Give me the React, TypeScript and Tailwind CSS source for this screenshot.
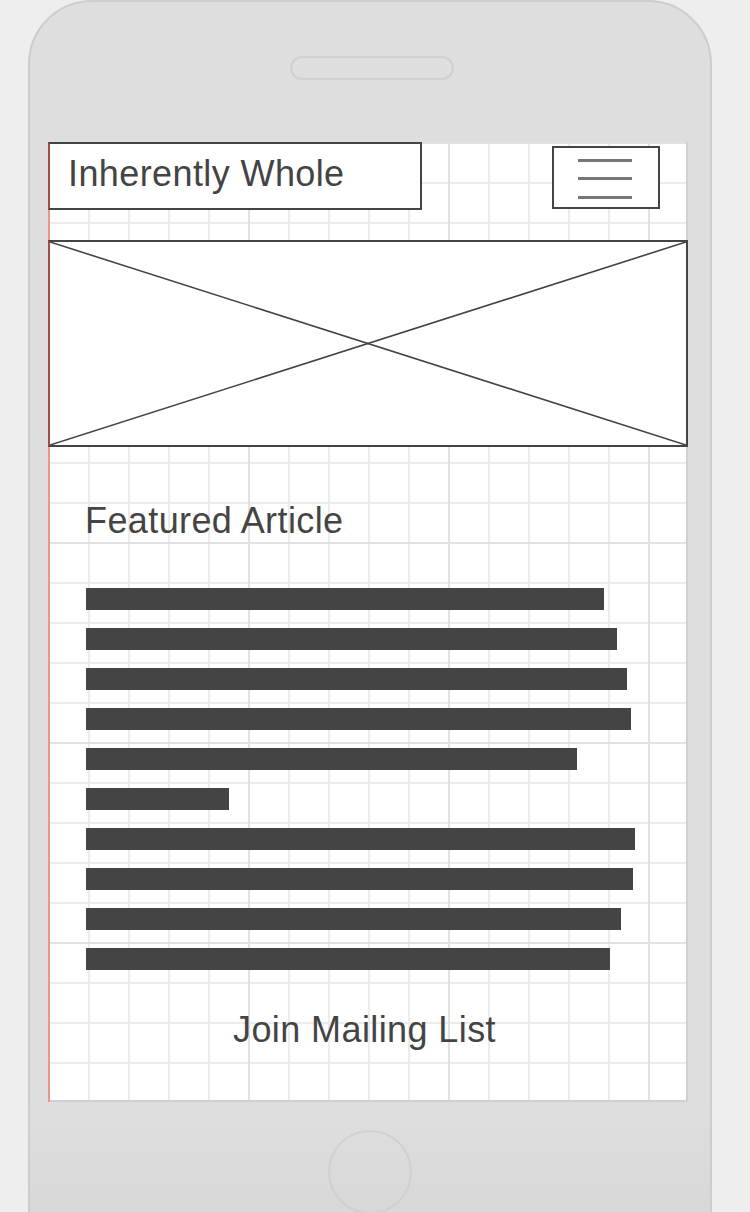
import React from "react";

const bars = [604, 617, 627, 631, 577, 229, 635, 633, 621, 610];

export default function App() {
  return (
    <div
      className="w-[750px] h-[1212px] overflow-hidden bg-[#eeeeee]"
      style={{ fontFamily: '"Liberation Sans", Arial, sans-serif' }}
    >
      <div className="ml-[28px] w-[684px] h-[1260px] border-2 border-[#cdcdcd] rounded-t-[64px] [background-image:linear-gradient(to_bottom,#dedede_88%,#d6d6d6_100%)]">
        {/* speaker */}
        <div className="mt-[54px] ml-[260px] w-[164px] h-[24px] rounded-full border-2 border-[#d0d0d0]" />
        {/* screen */}
        <div className="mt-[62px] ml-[18px] w-[640px] h-[960px] bg-white shadow-[inset_2px_0_0_#e8968c,inset_-2px_-2px_0_#d0d0d0] [background-image:linear-gradient(to_right,#e2e2e2_2px,transparent_2px),linear-gradient(to_bottom,#e2e2e2_2px,transparent_2px),linear-gradient(to_right,#ececec_2px,transparent_2px),linear-gradient(to_bottom,#ececec_2px,transparent_2px)] [background-size:200px_200px,200px_200px,40px_40px,40px_40px]">
          {/* header */}
          <div className="flex items-start">
            <div className="w-[374px] h-[68px] bg-white border-2 border-[#444444] border-l-[#9e4f46] pl-[18px] pt-[12px] text-[36px] leading-[36px] tracking-[0.4px] text-[#444444]">
              Inherently Whole
            </div>
            <div className="ml-auto mr-[28px] mt-[4px] w-[108px] h-[63px] bg-white border-2 border-[#444444] pl-[24px] pt-[11px]">
              <div className="w-[54px] h-[3px] bg-[#777777]" />
              <div className="mt-[15px] w-[54px] h-[3px] bg-[#777777]" />
              <div className="mt-[16px] w-[54px] h-[3px] bg-[#777777]" />
            </div>
          </div>
          {/* image placeholder */}
          <div className="mt-[30px] w-[640px] h-[207px] bg-white border-2 border-[#444444] border-l-[#9e4f46]">
            <svg width="100%" height="100%" viewBox="0 0 636 203" preserveAspectRatio="none" className="block">
              <line x1="0" y1="0" x2="636" y2="203" stroke="#444444" strokeWidth="1.6" />
              <line x1="0" y1="203" x2="636" y2="0" stroke="#444444" strokeWidth="1.6" />
            </svg>
          </div>
          {/* featured */}
          <div className="mt-[56px] pl-[37px] text-[36px] leading-[36px] tracking-[0.4px] text-[#444444]">
            Featured Article
          </div>
          <div className="mt-[49px] pl-[38px] flex flex-col gap-[18px]">
            {bars.map((r, i) => (
              <div key={i} className="h-[22px] bg-[#444444]" style={{ width: r - 86 }} />
            ))}
          </div>
          <div className="mt-[42px] pr-[7px] text-center text-[36px] leading-[36px] tracking-[0.4px] text-[#444444]">
            Join Mailing List
          </div>
        </div>
        {/* home button */}
        <div className="mt-[28px] ml-[298px] w-[84px] h-[84px] rounded-full border-2 border-[#d0d0d0]" />
      </div>
    </div>
  );
}
